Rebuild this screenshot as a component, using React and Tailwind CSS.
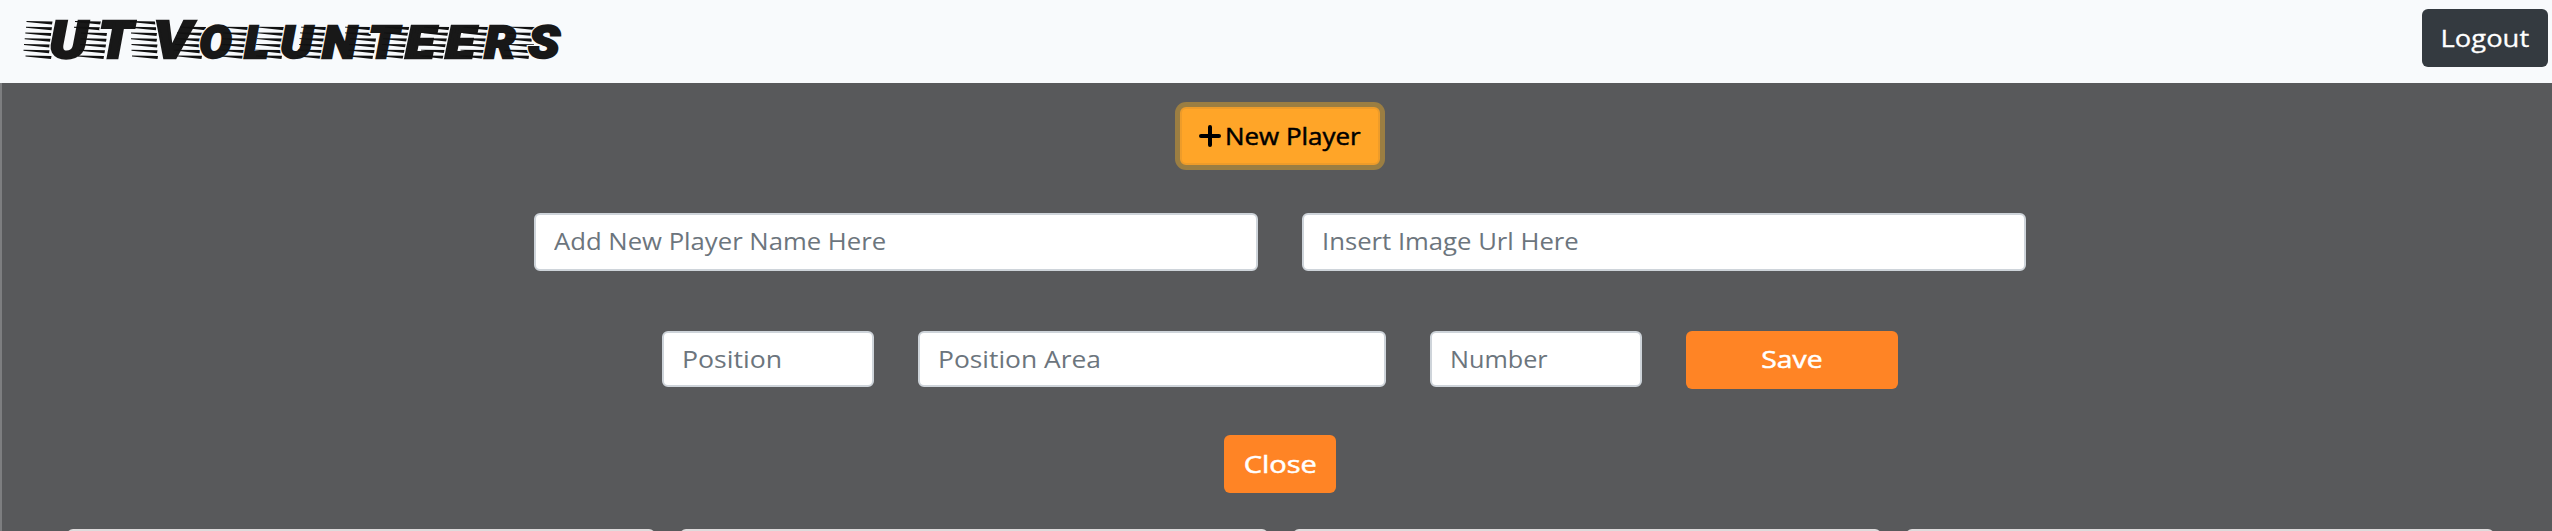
const LETTERS = [
  { c: 'U', x: 50, w: 37, big: true, ends: [52.5, 52, 51.3, 50.7, 50, 49.5, 51.5] },
  { c: 'T', x: 99, w: 33, big: true, ends: [101, 100, 107, 106.5, 106, 105, 104] },
  { c: 'V', x: 154, w: 37, big: true, ends: [156, 156.5, 157, 157, 157.5, 157.5, 158] },
  { c: 'O', x: 200, w: 31, ends: [206, 203, 202, 201, 200, 202] },
  { c: 'L', x: 245, w: 23, ends: [250, 249, 248, 247, 246, 245] },
  { c: 'U', x: 281, w: 31, ends: [284, 283.5, 283, 282, 281, 282] },
  { c: 'N', x: 323, w: 33, ends: [327, 326, 325.5, 325, 324, 323] },
  { c: 'T', x: 369, w: 29, ends: [371, 371, 376, 375, 374.5, 373] },
  { c: 'E', x: 406, w: 28, ends: [411, 410, 409, 408, 407.5, 406.5] },
  { c: 'E', x: 446, w: 28, ends: [450, 449.5, 449, 448, 447, 446] },
  { c: 'R', x: 485, w: 30, ends: [489.5, 489, 488, 487.5, 486.5, 485.5] },
  { c: 'S', x: 529, w: 30, ends: [537, 533, 532, 534, 530, 529] },
];

function Logo() {
  return (
    <svg width="580" height="83" viewBox="0 0 580 83" role="img" aria-label="UT Volunteers">
      {LETTERS.map((l, i) => {
        const glyph = {
          x: l.x - 0.5,
          y: 58,
          textLength: l.w + 1,
          lengthAdjust: 'spacingAndGlyphs',
          className: l.big
            ? "font-['Roboto'] text-[51px] font-black italic"
            : "font-['Roboto'] text-[43.5px] font-black italic",
        };
        return (
          <g key={i}>
            {l.ends.map((end, r) => {
              const y = (l.big ? 21 : 26.7) + r * 5.75;
              const tip = end - 26;
              return <path key={r} fill="#111" d={`M${tip} ${y}L${end} ${y + 0.4}L${end - 0.5} ${y + 3.5}L${tip} ${y + 0.9}Z`} />;
            })}
            <text {...glyph} aria-hidden="true" fill="#f8fafc" stroke="#f8fafc" strokeWidth="4.4">{l.c}</text>
            <text {...glyph} fill="#181818" stroke="#181818" strokeWidth="2.4">{l.c}</text>
          </g>
        );
      })}
    </svg>
  );
}

function Label({ children, className = '' }) {
  return <span className={`inline-block whitespace-nowrap ${className}`}>{children}</span>;
}

function Field({ children, className = '', stretch }) {
  return (
    <div className={`flex items-center rounded-[6px] border-2 border-[#ced4da] bg-white pl-[18px] text-[#6c757d] ${className}`}>
      <Label className={`origin-left ${stretch}`}>{children}</Label>
    </div>
  );
}

export default function App() {
  return (
    <div className="h-[531px] overflow-hidden bg-[#58595b] font-['Open_Sans',sans-serif] text-[24px] leading-[36px]">
      <nav className="flex h-[83px] items-start justify-between bg-[#f8fafc] pr-1">
        <Logo />
        <button className="mt-[9px] flex h-[58px] w-[126px] items-center justify-center rounded-[6px] bg-[#343a40] text-white">
          <Label className="scale-x-[1.14] [-webkit-text-stroke:0.3px_white]">Logout</Label>
        </button>
      </nav>
      <main className="flex h-[448px] flex-col items-center border-l-2 border-[#7d7e80] pt-[24px]">
        <button className="ml-[6px] flex h-[58px] w-[200px] shrink-0 items-center rounded-[6px] border-2 border-[#ee9c2a] bg-[#ffa528] pl-[17px] text-black ring-[5px] ring-[#9b7e42]">
          <svg width="22" height="22" viewBox="0 0 22 22" className="shrink-0">
            <path d="M11 2V20M2 11H20" stroke="#000" strokeWidth="4" strokeLinecap="round" />
          </svg>
          <Label className="ml-[4px] origin-left scale-x-[1.08] [-webkit-text-stroke:0.5px_black]">New Player</Label>
        </button>
        <div className="mt-[48px] flex gap-[44px] pl-[6px]">
          <Field className="h-[58px] w-[724px] pb-[3px]" stretch="scale-x-[1.07]">Add New Player Name Here</Field>
          <Field className="h-[58px] w-[724px] pb-[3px]" stretch="scale-x-[1.07]">Insert Image Url Here</Field>
        </div>
        <div className="mt-[60px] flex items-start gap-[44px] pl-[6px]">
          <Field className="h-[56px] w-[212px] pb-px" stretch="scale-x-[1.11]">Position</Field>
          <Field className="h-[56px] w-[468px] pb-px" stretch="scale-x-[1.1]">Position Area</Field>
          <Field className="h-[56px] w-[212px] pb-px" stretch="scale-x-[1.05]">Number</Field>
          <button className="flex h-[58px] w-[212px] items-center justify-center rounded-[6px] bg-[#ff8425] pb-[3px] text-white">
            <Label className="scale-x-[1.18] [-webkit-text-stroke:0.5px_white]">Save</Label>
          </button>
        </div>
        <button className="ml-[6px] mt-[46px] flex h-[58px] w-[112px] shrink-0 items-center justify-center rounded-[6px] bg-[#ff8425] text-white">
          <Label className="scale-x-[1.21] [-webkit-text-stroke:0.5px_white]">Close</Label>
        </button>
        <div className="mt-[36px] flex shrink-0 gap-[25px] pl-[6px]">
          <div className="h-[40px] w-[588px] rounded-t-[6px] bg-[#dedbdc]" />
          <div className="h-[40px] w-[588px] rounded-t-[6px] bg-[#dedbdc]" />
          <div className="h-[40px] w-[588px] rounded-t-[6px] bg-[#dedbdc]" />
          <div className="h-[40px] w-[588px] rounded-t-[6px] bg-[#dedbdc]" />
        </div>
      </main>
    </div>
  );
}
